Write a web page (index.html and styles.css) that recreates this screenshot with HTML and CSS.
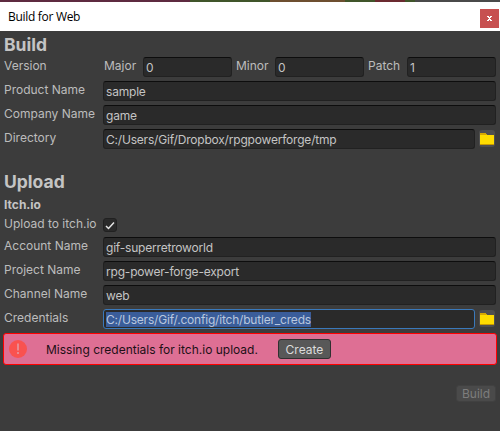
FILE: index.html
```html
<!DOCTYPE html>
<html>
<head>
  <meta charset="utf-8">
  <title>Build for Web</title>
  <link rel="stylesheet" href="styles.css">
</head>
<body>
  <div class="desktop-strip"></div>
  <div class="titlebar">
    <span class="title">Build for Web</span>
    <div class="close">
      <svg width="5" height="5" viewBox="0 0 5 5" shape-rendering="crispEdges"><path d="M0 0h2v1h1V0h2v1H4v1H3v1h1v1h1v1H3V4H2v1H0V4h1V3h1V2H1V1H0z" fill="#fff"/></svg>
    </div>
  </div>
  <div class="window">
    <h1 class="section">Build</h1>
    <div class="row">
      <label class="label">Version</label>
      <label class="sublabel major">Major</label>
      <div class="field">0</div>
      <label class="sublabel">Minor</label>
      <div class="field">0</div>
      <label class="sublabel">Patch</label>
      <div class="field">1</div>
    </div>
    <div class="row">
      <label class="label">Product Name</label>
      <div class="field">sample</div>
    </div>
    <div class="row">
      <label class="label">Company Name</label>
      <div class="field">game</div>
    </div>
    <div class="row">
      <label class="label">Directory</label>
      <div class="field">C:/Users/Gif/Dropbox/rpgpowerforge/tmp</div>
      <button class="folder">
        <svg width="14" height="12" viewBox="0 0 14 12" shape-rendering="crispEdges"><path d="M0 0h6l1 2h7v10H0z" fill="#ffdc00"/><path d="M0 0h6l1 2H0z" fill="#d8a800"/><path d="M0 11h14v1H0z" fill="#c89a00"/></svg>
      </button>
    </div>

    <h1 class="section upload">Upload</h1>
    <div class="subsection">Itch.io</div>
    <div class="row check-row">
      <label class="label">Upload to itch.io</label>
      <div class="checkbox">
        <svg width="10" height="9" viewBox="0 0 10 9"><path d="M1 5l2.500 2.500L9 1.500" fill="none" stroke="#e4e4e4" stroke-width="1.5"/></svg>
      </div>
    </div>
    <div class="row">
      <label class="label">Account Name</label>
      <div class="field">gif-superretroworld</div>
    </div>
    <div class="row">
      <label class="label">Project Name</label>
      <div class="field">rpg-power-forge-export</div>
    </div>
    <div class="row">
      <label class="label">Channel Name</label>
      <div class="field">web</div>
    </div>
    <div class="row">
      <label class="label">Credentials</label>
      <div class="field focused"><span class="selected">C:/Users/Gif/.config/itch/butler_creds</span></div>
      <button class="folder">
        <svg width="14" height="12" viewBox="0 0 14 12" shape-rendering="crispEdges"><path d="M0 0h6l1 2h7v10H0z" fill="#ffdc00"/><path d="M0 0h6l1 2H0z" fill="#d8a800"/><path d="M0 11h14v1H0z" fill="#c89a00"/></svg>
      </button>
    </div>

    <div class="error-box">
      <svg class="error-icon" width="18" height="18" viewBox="0 0 18 18">
        <circle cx="9" cy="9" r="9" fill="#f9524f"/>
        <path d="M8 3.500h2v7H8z" fill="#e98a90"/>
        <path d="M8 12h2v2H8z" fill="#e98a90"/>
      </svg>
      <span class="error-text">Missing credentials for itch.io upload.</span>
      <button class="btn create">Create</button>
    </div>

    <div class="actions">
      <button class="btn build" disabled>Build</button>
    </div>
  </div>
</body>
</html>
```

FILE: styles.css
```css
html, body {
  margin: 0;
  padding: 0;
}
body {
  width: 500px;
  height: 431px;
  overflow: hidden;
  font-family: Inter, "Noto Sans", sans-serif;
  font-size: 12px;
  background: #3c3c3c;
}
.desktop-strip {
  height: 2px;
  background: linear-gradient(90deg, #5e2a40 0 38%, #40552a 38% 54%, #6d4f30 54% 69%, #40552a 69% 75%, #6b2a30 75% 81%, #40552a 81% 83%, #4a4a4a 83%);
}
.titlebar {
  height: 29px;
  background: #fff;
  display: flex;
  align-items: center;
  justify-content: space-between;
}
.title {
  margin-left: 8px;
  font-family: "Open Sans", sans-serif;
  font-size: 12px;
  letter-spacing: -0.3px;
  color: #000;
}
.close {
  width: 19px;
  height: 19px;
  margin: 4px 1px 0 0;
  background: #c75050;
  display: flex;
  align-items: center;
  justify-content: center;
}
.window {
  height: 400px;
  padding: 0 4px;
  box-sizing: border-box;
  color: #bcbcbc;
}
.section {
  margin: 0;
  height: 26px;
  line-height: 28px;
  font-size: 17.5px;
  font-weight: 700;
  color: #c4c4c4;
}
.section.upload {
  margin-top: 20px;
  line-height: 26px;
}
.subsection {
  height: 23px;
  line-height: 20px;
  font-weight: 700;
  color: #c4c4c4;
}
.row {
  display: flex;
  align-items: flex-start;
  height: 20px;
  margin-bottom: 4px;
}
.label {
  flex: 0 0 99px;
  line-height: 17px;
  white-space: nowrap;
}
.sublabel {
  flex: 0 0 39px;
  line-height: 17px;
  margin-left: 4px;
}
.sublabel.major {
  margin-left: 1px;
}
.field {
  flex: 1 1 0;
  min-width: 0;
  height: 20px;
  box-sizing: border-box;
  background: #2a2a2a;
  border: 1px solid #212121;
  border-top-color: #0d0d0d;
  border-radius: 3px;
  padding: 0 2px;
  line-height: 20px;
  letter-spacing: -0.2px;
  color: #c4c4c4;
  white-space: nowrap;
  overflow: hidden;
}
.field.focused {
  border-color: #3a79bb;
}
.selected {
  background: #3a5d9a;
  color: #b9c7de;
  display: inline-block;
  height: 15px;
  line-height: 15px;
}
.folder {
  flex: none;
  width: 16px;
  height: 17px;
  margin: 1px 1px 0 4px;
  padding: 0;
  border: 0;
  border-radius: 3px;
  background: #4f4f4f;
  display: flex;
  align-items: center;
  justify-content: center;
}
.check-row {
  height: 15px;
}
.check-row .label {
  line-height: 11px;
}
.checkbox {
  width: 14px;
  height: 14px;
  box-sizing: border-box;
  background: #2a2a2a;
  border: 1px solid #212121;
  border-radius: 3px;
  display: flex;
  align-items: center;
  justify-content: center;
}
.error-box {
  display: flex;
  align-items: center;
  height: 32px;
  box-sizing: border-box;
  margin: 0 -1px;
  border: 1px solid #f00;
  border-radius: 3px;
  background: #de6f94;
  color: #1d1016;
}
.error-icon {
  margin-left: 5px;
}
.error-text {
  margin-left: 19px;
}
.btn {
  font-family: inherit;
  font-size: 12px;
  box-sizing: border-box;
  border-radius: 3px;
  padding: 0;
}
.create {
  width: 53px;
  height: 20px;
  margin-left: 20px;
  background: #585858;
  border: 1px solid #303030;
  color: #dcdcdc;
}
.actions {
  display: flex;
  justify-content: flex-end;
  margin-top: 20px;
}
.build {
  width: 40px;
  height: 17px;
  background: #4a4a4a;
  border: 1px solid #414141;
  color: #7d7d7d;
}
```
